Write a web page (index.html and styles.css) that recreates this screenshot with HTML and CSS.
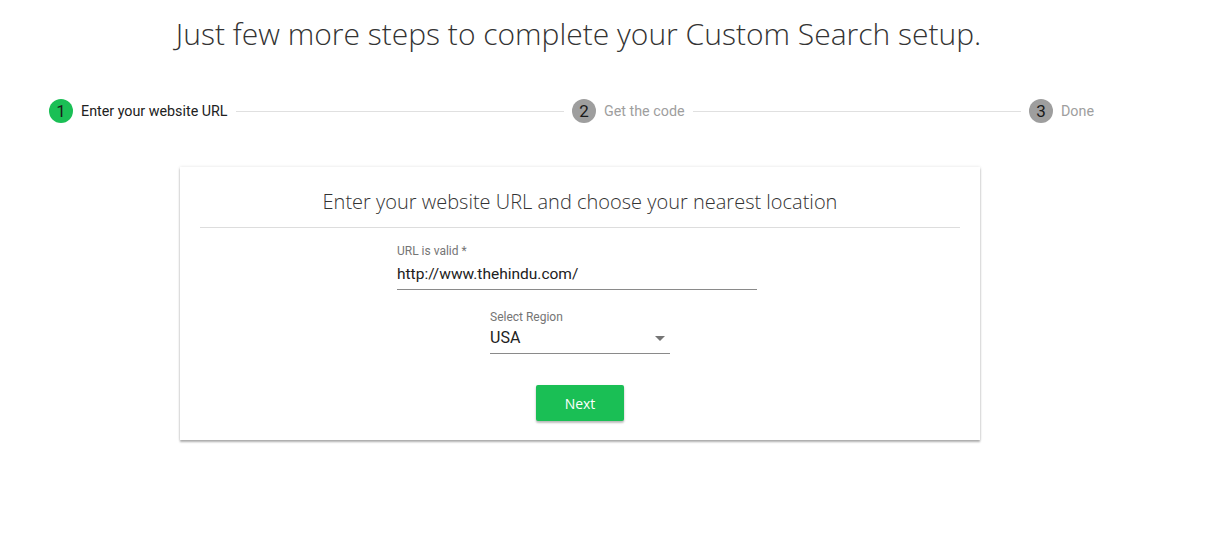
FILE: index.html
```html
<!DOCTYPE html>
<html lang="en">
<head>
<meta charset="utf-8">
<title>Custom Search setup</title>
<link rel="stylesheet" href="styles.css">
</head>
<body>
<h1 class="page-title">Just few more steps to complete your Custom Search setup.</h1>

<div class="stepper">
  <div class="step active">
    <span class="step-num">1</span>
    <span class="step-label">Enter your website URL</span>
  </div>
  <div class="step-line"></div>
  <div class="step">
    <span class="step-num">2</span>
    <span class="step-label">Get the code</span>
  </div>
  <div class="step-line"></div>
  <div class="step">
    <span class="step-num">3</span>
    <span class="step-label">Done</span>
  </div>
</div>

<div class="card">
  <h2 class="card-title">Enter your website URL and choose your nearest location</h2>
  <div class="divider"></div>
  <div class="field url-field">
    <label class="field-label">URL is valid *</label>
    <div class="field-value">http://www.thehindu.com/</div>
  </div>
  <div class="field select-field">
    <label class="field-label">Select Region</label>
    <div class="field-value select-value">
      <span>USA</span>
      <span class="arrow"></span>
    </div>
  </div>
  <div class="actions">
    <button class="btn-next">Next</button>
  </div>
</div>
</body>
</html>
```

FILE: styles.css
```css
html, body {
  margin: 0;
  padding: 0;
  background: #ffffff;
}

body {
  font-family: Roboto, "Liberation Sans", Arial, sans-serif;
  color: #212121;
  min-height: 560px;
}

.page-title {
  margin: 0;
  padding-top: 14px;
  padding-right: 70px;
  text-align: center;
  font-family: "Open Sans", "Liberation Sans", sans-serif;
  font-weight: 300;
  font-size: 30px;
  line-height: 40px;
  color: #333333;
}

.stepper {
  display: flex;
  align-items: center;
  margin-top: 45px;
  margin-left: 49px;
  width: 1045px;
  height: 24px;
}

.step {
  display: flex;
  align-items: center;
  gap: 8px;
}

.step-num {
  width: 24px;
  height: 24px;
  border-radius: 50%;
  background: #9e9e9e;
  color: #1a1a1a;
  font-size: 17px;
  line-height: 24px;
  text-align: center;
}

.step.active .step-num {
  background: #1abf55;
}

.step-label {
  font-size: 14.3px;
  color: #9e9e9e;
}

.step.active .step-label {
  color: #212121;
}

.step-line {
  flex: 1;
  height: 1px;
  background: #e0e0e0;
  margin: 0 8px;
}

.card {
  width: 800px;
  height: 273px;
  margin: 44px 0 40px 180px;
  box-sizing: border-box;
  padding: 0 20px;
  background: #fff;
  box-shadow: 0 2px 2px rgba(0,0,0,0.3), 0 0 3px rgba(0,0,0,0.12);
  display: flex;
  flex-direction: column;
}

.card-title {
  margin: 0;
  padding-top: 21px;
  text-align: center;
  font-family: "Open Sans", "Liberation Sans", sans-serif;
  font-weight: 300;
  font-size: 20px;
  line-height: 28px;
  color: #333;
  box-sizing: border-box;
  height: 60px;
}

.divider {
  height: 1px;
  background: #dddddd;
}

.field {
  display: flex;
  flex-direction: column;
}

.field-label {
  font-size: 12px;
  color: #757575;
  line-height: 14px;
}

.field-value {
  font-size: 16px;
  line-height: 20px;
  color: #212121;
  border-bottom: 1px solid #8a8a8a;
  padding: 4px 0 5px;
}

.url-field {
  width: 360px;
  margin: 16px 0 0 197px;
}

.url-field .field-value {
  padding-top: 6px;
  font-size: 15.5px;
}

.select-field {
  width: 180px;
  margin: 20px 0 0 290px;
}

.select-value {
  display: flex;
  justify-content: space-between;
  align-items: center;
}

.arrow {
  width: 0;
  height: 0;
  border-left: 5px solid transparent;
  border-right: 5px solid transparent;
  border-top: 5px solid #757575;
  margin-right: 5px;
}

.actions {
  display: flex;
  justify-content: center;
  margin-top: 31px;
}

.btn-next {
  width: 88px;
  height: 36px;
  border: none;
  border-radius: 2px;
  background: #1abf55;
  color: #fff;
  font-family: "Open Sans", "Liberation Sans", sans-serif;
  font-size: 14px;
  box-shadow: 0 2px 2px rgba(0,0,0,0.2), 0 1px 3px rgba(0,0,0,0.12);
  cursor: pointer;
}
```
